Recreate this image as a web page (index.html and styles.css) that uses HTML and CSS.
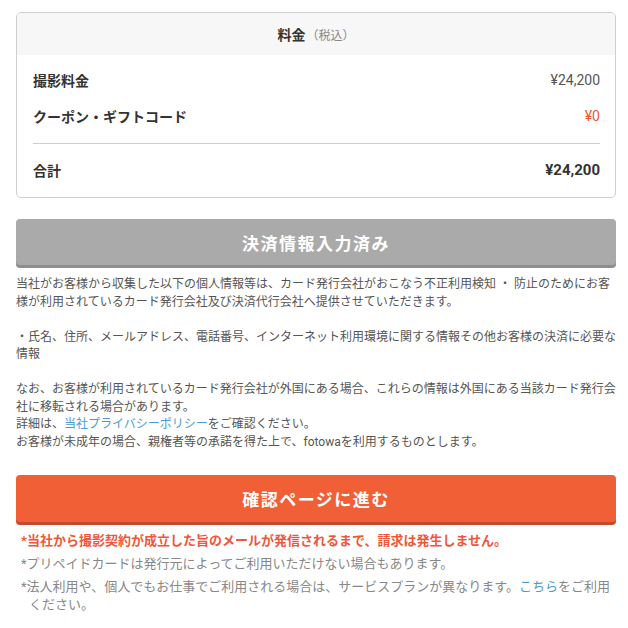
FILE: index.html
```html
<!DOCTYPE html>
<html lang="ja">
<head>
<meta charset="utf-8">
<link rel="stylesheet" href="styles.css">
</head>
<body>
<div class="page">
  <section class="card">
    <div class="card-head"><span class="head-title">料金</span><span class="head-sub">（税込）</span></div>
    <div class="card-body">
      <div class="row"><span class="label">撮影料金</span><span class="value">¥24,200</span></div>
      <div class="row row-gap"><span class="label">クーポン・ギフトコード</span><span class="value value-red">¥0</span></div>
      <div class="divider"></div>
      <div class="row row-total"><span class="label">合計</span><span class="value value-total">¥24,200</span></div>
    </div>
  </section>

  <button class="btn btn-gray">決済情報入力済み</button>

  <div class="info">
    <p>当社がお客様から収集した以下の個人情報等は、カード発行会社がおこなう不正利用検知 ・ 防止のためにお客様が利用されているカード発行会社及び決済代行会社へ提供させていただきます。</p>
    <p>・氏名、住所、メールアドレス、電話番号、インターネット利用環境に関する情報その他お客様の決済に必要な情報</p>
    <p>なお、お客様が利用されているカード発行会社が外国にある場合、これらの情報は外国にある当該カード発行会社に移転される場合があります。<br>詳細は、<a class="link" href="#">当社プライバシーポリシー</a>をご確認ください。<br>お客様が未成年の場合、親権者等の承諾を得た上で、fotowaを利用するものとします。</p>
  </div>

  <button class="btn btn-orange">確認ページに進む</button>

  <ul class="notes">
    <li class="note-red">*当社から撮影契約が成立した旨のメールが発信されるまで、請求は発生しません。</li>
    <li>*プリペイドカードは発行元によってご利用いただけない場合もあります。</li>
    <li>*法人利用や、個人でもお仕事でご利用される場合は、サービスプランが異なります。<a class="link" href="#">こちら</a>をご利用ください。</li>
  </ul>
</div>
</body>
</html>
```

FILE: styles.css
```css
* { box-sizing: border-box; }
html, body { margin: 0; padding: 0; background: #fff; }
body {
  font-family: Roboto, "Noto Sans CJK JP", sans-serif;
  color: #333;
}
.page {
  width: 600px;
  margin-left: 16px;
  padding-top: 12px;
}
.card {
  border: 1px solid #cfcfcf;
  border-radius: 5px;
  overflow: hidden;
}
.card-head {
  height: 42px;
  background: #f7f7f7;
  display: flex;
  align-items: center;
  justify-content: center;
}
.head-title { font-size: 14px; font-weight: 700; color: #333; }
.head-sub { font-size: 12px; color: #888; margin-left: 1px; }
.card-body {
  padding: 15px 15px 17px 16px;
}
.row {
  display: flex;
  justify-content: space-between;
  align-items: center;
  height: 20px;
}
.row-gap { margin-top: 16px; }
.label { font-size: 14px; font-weight: 700; color: #333; }
.value { font-size: 14px; color: #555; }
.value-red { color: #f0573a; }
.value-total { font-size: 15px; font-weight: 700; color: #333; }
.divider {
  height: 1px;
  background: #cccccc;
  margin-top: 17px;
}
.row-total { margin-top: 16px; }

.btn {
  display: block;
  width: 100%;
  border: 0;
  border-radius: 4px;
  color: #fff;
  font-family: Roboto, "Noto Sans CJK JP", sans-serif;
  font-size: 17px;
  font-weight: 700;
  letter-spacing: 1.5px;
  padding: 0;
}
.btn-gray {
  margin-top: 21px;
  height: 46px;
  background: #aaaaaa;
  box-shadow: 0 3px 0 #8e8e8e;
}
.btn-orange {
  margin-top: 24px;
  height: 47px;
  background: #f15f37;
  box-shadow: 0 3px 0 #c44a2b;
}

.info {
  margin-top: 11px;
  font-size: 12px;
  line-height: 17.5px;
  color: #555;
}
.info p { margin: 0; }
.info p + p { margin-top: 17.5px; }
.link { color: #4a9bd6; text-decoration: none; }

.notes {
  list-style: none;
  margin: 10px 0 0 0;
  padding: 0 0 0 13px;
  font-size: 13px;
  line-height: 17.5px;
  color: #888;
}
.notes li {
  text-indent: -8px;
}
.notes li + li { margin-top: 5.5px; }
.note-red {
  color: #f0573a;
  font-weight: 700;
}
```
